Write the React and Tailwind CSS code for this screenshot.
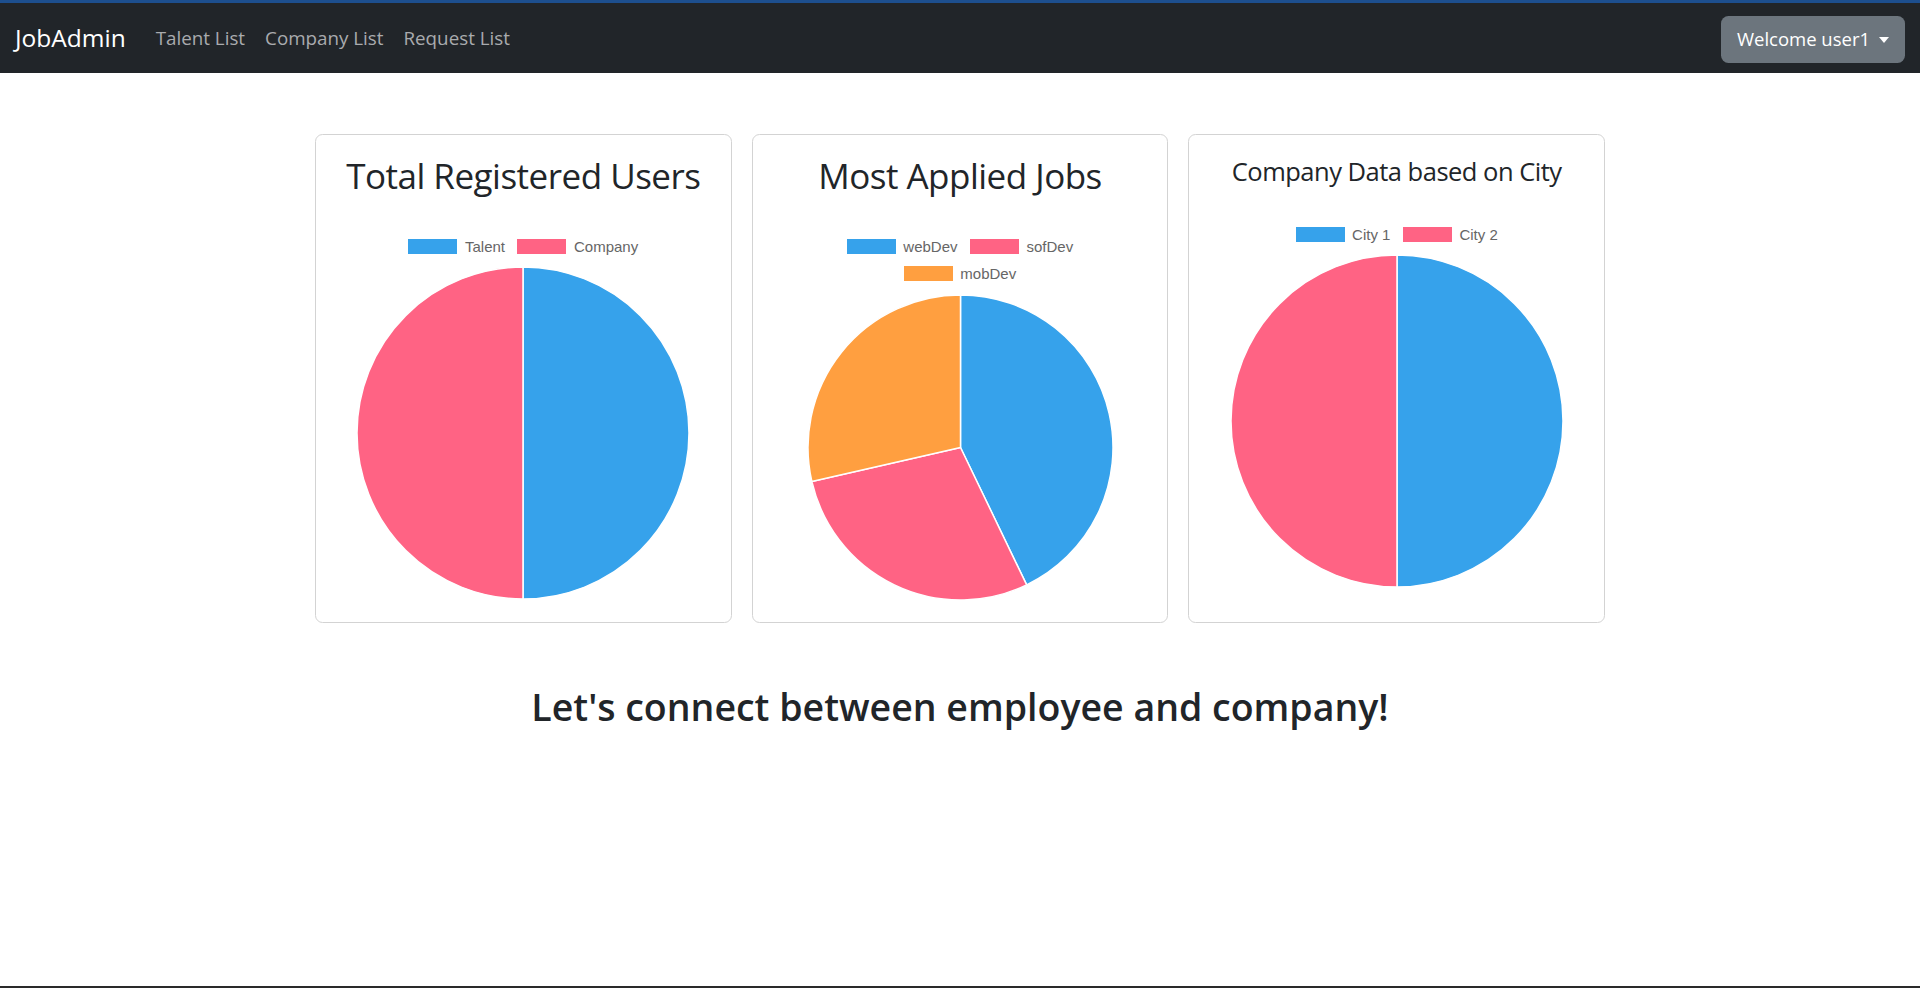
import React from "react";

const BLUE = "#36a2eb";
const PINK = "#ff6384";
const ORANGE = "#ff9f40";

function slicePath(cx, cy, r, a0, a1) {
  const rad = (d) => (d * Math.PI) / 180;
  const x0 = cx + r * Math.sin(rad(a0));
  const y0 = cy - r * Math.cos(rad(a0));
  const x1 = cx + r * Math.sin(rad(a1));
  const y1 = cy - r * Math.cos(rad(a1));
  const large = a1 - a0 > 180 ? 1 : 0;
  return `M ${cx} ${cy} L ${x0} ${y0} A ${r} ${r} 0 ${large} 1 ${x1} ${y1} Z`;
}

function Pie({ size, data }) {
  const total = data.reduce((s, d) => s + d.value, 0);
  const c = size / 2;
  const r = size / 2 - 1;
  let acc = 0;
  return (
    <svg width={size} height={size} viewBox={`0 0 ${size} ${size}`}>
      {data.map((d, i) => {
        const a0 = (acc / total) * 360;
        acc += d.value;
        const a1 = (acc / total) * 360;
        return (
          <path
            key={i}
            d={slicePath(c, c, r, a0, a1)}
            fill={d.color}
            stroke="#ffffff"
            strokeWidth="1.5"
            strokeLinejoin="round"
          />
        );
      })}
    </svg>
  );
}

function LegendItem({ color, label }) {
  return (
    <div className="flex items-start">
      <div className="w-[49px] h-[15px]" style={{ backgroundColor: color }} />
      <span className="ml-[7.5px] text-[15px] leading-[15px] text-[#666666] font-['Liberation_Sans',Arial,sans-serif]">
        {label}
      </span>
    </div>
  );
}

function Chart({ rows, data, pieSize }) {
  return (
    <div className="w-[375px] flex flex-col items-center">
      <div className="pt-[14px] flex flex-col items-center">
        {rows.map((row, i) => (
          <div key={i} className="h-[27.5px] flex items-start gap-x-[12.5px]">
            {row.map((label) => {
              const d = data.find((x) => x.label === label);
              return <LegendItem key={label} color={d.color} label={label} />;
            })}
          </div>
        ))}
      </div>
      <Pie size={pieSize} data={data} />
    </div>
  );
}

function Card({ title, small, children }) {
  return (
    <div className="border border-[#d3d3d3] rounded-[7.5px] bg-white px-[20px] pt-[20px] pb-[21.5px] flex flex-col items-center">
      <h2
        className={
          small
            ? "text-[25.5px] tracking-[-0.5px] leading-[32px] h-[36px] font-medium text-[#212529] mb-[21.5px] whitespace-nowrap"
            : "text-[35px] tracking-[-0.5px] leading-[42px] h-[48px] font-medium text-[#212529] mb-[21.5px] whitespace-nowrap"
        }
      >
        {title}
      </h2>
      {children}
    </div>
  );
}

export default function App() {
  const users = [
    { label: "Talent", value: 1, color: BLUE },
    { label: "Company", value: 1, color: PINK },
  ];
  const jobs = [
    { label: "webDev", value: 3, color: BLUE },
    { label: "sofDev", value: 2, color: PINK },
    { label: "mobDev", value: 2, color: ORANGE },
  ];
  const cities = [
    { label: "City 1", value: 1, color: BLUE },
    { label: "City 2", value: 1, color: PINK },
  ];

  return (
    <div className="h-[988px] flex flex-col bg-white font-['Open_Sans','Noto_Sans',sans-serif] text-[#212529] overflow-hidden">
      <div className="h-[3px] bg-[#1d4f8e] shrink-0" />
      <nav className="h-[70px] shrink-0 bg-[#212529] flex items-center justify-between px-[15px]">
        <div className="flex items-center">
          <span className="text-[24.5px] text-white mr-[20px] leading-none">JobAdmin</span>
          <div className="flex items-center text-[18.8px] text-[#a9abae]">
            <span className="px-[10px]">Talent List</span>
            <span className="px-[10px]">Company List</span>
            <span className="px-[10px]">Request List</span>
          </div>
        </div>
        <button className="h-[47px] w-[184px] justify-center rounded-[7.5px] bg-[#6c757d] text-white text-[18.5px] flex items-center mt-[2px]">
          <span>Welcome user1</span>
          <span className="ml-[9px] mt-[1px] w-0 h-0 border-t-[6px] border-t-white border-x-[5px] border-x-transparent" />
        </button>
      </nav>

      <main className="flex-1 flex flex-col items-center">
        <div className="mt-[61px] w-[1290px] grid grid-cols-3 gap-[20px]">
          <Card title="Total Registered Users">
            <Chart rows={[["Talent", "Company"]]} data={users} pieSize={334} />
          </Card>
          <Card title="Most Applied Jobs">
            <Chart rows={[["webDev", "sofDev"], ["mobDev"]]} data={jobs} pieSize={307} />
          </Card>
          <Card title="Company Data based on City" small>
            <Chart rows={[["City 1", "City 2"]]} data={cities} pieSize={334} />
          </Card>
        </div>
        <h2 className="mt-[60px] text-[37.5px] leading-[48px] font-semibold text-[#212529]">
          Let's connect between employee and company!
        </h2>
      </main>
      <div className="h-[2px] bg-[#2a2a2a] shrink-0" />
    </div>
  );
}
